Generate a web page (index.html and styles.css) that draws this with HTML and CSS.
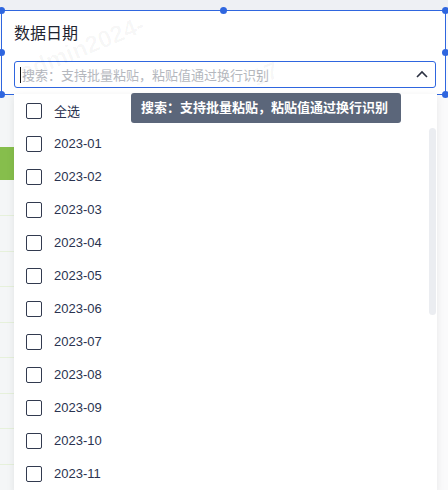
FILE: index.html
```html
<!DOCTYPE html>
<html lang="zh-CN">
<head>
<title>数据日期</title>
<meta charset="utf-8">
<meta name="viewport" content="width=device-width, initial-scale=1">
<link rel="stylesheet" href="styles.css">
</head>
<body>

<div class="page">
  <div class="topbar"></div>

  <!-- selected filter widget -->
  <div class="widget">
    <div class="widget-title">数据日期</div>
    <div class="search">
      <span class="caret"></span>
      <span class="placeholder">搜索：支持批量粘贴，粘贴值通过换行识别</span>
      <svg class="chevron" width="12" height="8" viewBox="0 0 12 8">
        <path d="M1 7 L6 2 L11 7" fill="none" stroke="#2b3142" stroke-width="1.6"/>
      </svg>
    </div>
    <span class="handle h-tl"></span>
    <span class="handle h-tm"></span>
    <span class="handle h-tr"></span>
    <span class="handle h-ml"></span>
    <span class="handle h-mr"></span>
    <span class="handle h-bl"></span>
    <span class="handle h-br"></span>
  </div>

  <!-- board behind the dropdown -->
  <div class="rail">
    <div class="rail-row first"></div>
    <div class="rail-row bar"></div>
    <div class="rail-row r36"></div>
    <div class="rail-row"></div>
    <div class="rail-row"></div>
    <div class="rail-row"></div>
    <div class="rail-row"></div>
    <div class="rail-row"></div>
    <div class="rail-row"></div>
    <div class="rail-row"></div>
    <div class="rail-row"></div>
  </div>

  <div class="watermark wm1">admin2024-</div>
  <div class="watermark wm2">17</div>

  <!-- dropdown -->
  <div class="dropdown">
    <ul class="options">
      <li><span class="box"></span>全选</li>
      <li><span class="box"></span>2023-01</li>
      <li><span class="box"></span>2023-02</li>
      <li><span class="box"></span>2023-03</li>
      <li><span class="box"></span>2023-04</li>
      <li><span class="box"></span>2023-05</li>
      <li><span class="box"></span>2023-06</li>
      <li><span class="box"></span>2023-07</li>
      <li><span class="box"></span>2023-08</li>
      <li><span class="box"></span>2023-09</li>
      <li><span class="box"></span>2023-10</li>
      <li><span class="box"></span>2023-11</li>
    </ul>
    <div class="scrollbar"></div>
  </div>

  <div class="tooltip">搜索：支持批量粘贴，粘贴值通过换行识别</div>
</div>

</body>
</html>
```

FILE: styles.css
```css
* {
  box-sizing: border-box;
}

body {
  margin: 0;
  font-family: "Liberation Sans", "Noto Sans CJK SC", sans-serif;
  background: #fff;
}

.page {
  position: relative;
  width: 448px;
  height: 490px;
  overflow: hidden;
  background: #fafafb;
}

.topbar {
  height: 10px;
  background: #eef0f4;
}

/* Filter widget with selection frame */
.widget {
  position: relative;
  z-index: 2;
  width: 445px;
  height: 85px;
  margin-left: 1px;
  background: #fff;
  border: 1px solid #2f66df;
  padding: 11px 9px 0 12px;
}

.widget-title {
  font-size: 16px;
  line-height: 24px;
  color: #1f2430;
  margin-bottom: 15px;
}

.search {
  display: flex;
  align-items: center;
  height: 27px;
  border: 1px solid #2f66df;
  border-radius: 3px;
  padding: 0 6px 0 5px;
}

.caret {
  width: 1px;
  height: 16px;
  background: #111;
}

.placeholder {
  flex: 1;
  font-size: 13px;
  color: #b5b8be;
  margin-left: 1px;
  white-space: nowrap;
}

.chevron {
  margin-right: 1px;
  margin-top: -1px;
}

.handle {
  position: absolute;
  width: 7px;
  height: 7px;
  border-radius: 50%;
  background: #2f66df;
}

.h-tl { left: -4px; top: -4px; }
.h-tm { left: 218px; top: -4px; }
.h-tr { right: -4px; top: -4px; }
.h-ml { left: -4px; top: 38px; }
.h-mr { right: -4px; top: 38px; }
.h-bl { left: -4px; bottom: -4px; }
.h-br { right: -4px; bottom: -4px; }

/* Left strip of the report behind */
.rail {
  width: 14px;
  background: #f4f6f7;
}

.rail-row {
  height: 35.5px;
  border-bottom: 1px solid #e6f1db;
}

.rail-row.first {
  height: 52px;
  border-bottom: none;
}

.rail-row.bar {
  height: 33px;
  background: #86be4c;
  border-bottom: none;
}

.rail-row.r36 {
  height: 36px;
}

.watermark {
  position: absolute;
  font-size: 24px;
  font-weight: bold;
  line-height: 28px;
  color: rgba(0, 0, 0, 0.035);
  transform: rotate(-22deg);
  transform-origin: left bottom;
  z-index: 3;
  pointer-events: none;
}

.wm1 { left: 26px; top: 58px; }
.wm2 { left: 258px; top: 64px; }

/* Dropdown */
.dropdown {
  position: absolute;
  z-index: 4;
  left: 14px;
  top: 94px;
  width: 423px;
  height: 400px;
  background: #fff;
  box-shadow: 0 2px 8px rgba(0, 0, 0, 0.08);
}

.options {
  list-style: none;
  margin: 0;
  padding: 0;
}

.options li {
  display: flex;
  align-items: center;
  height: 33px;
  padding-left: 12px;
  font-size: 13px;
  color: #2a3350;
}

.box {
  width: 16px;
  height: 16px;
  border: 1.5px solid #323a4f;
  border-radius: 2px;
  margin-right: 12px;
}

.scrollbar {
  position: absolute;
  right: 1px;
  top: 34px;
  width: 7px;
  height: 187px;
  border-radius: 4px;
  background: #ebedf1;
}

.tooltip {
  position: absolute;
  z-index: 5;
  left: 131px;
  top: 93px;
  width: 270px;
  height: 30px;
  background: #5b667a;
  border-radius: 3px;
  color: #fff;
  font-size: 13px;
  font-weight: bold;
  line-height: 30px;
  padding-left: 10px;
  white-space: nowrap;
}
```
